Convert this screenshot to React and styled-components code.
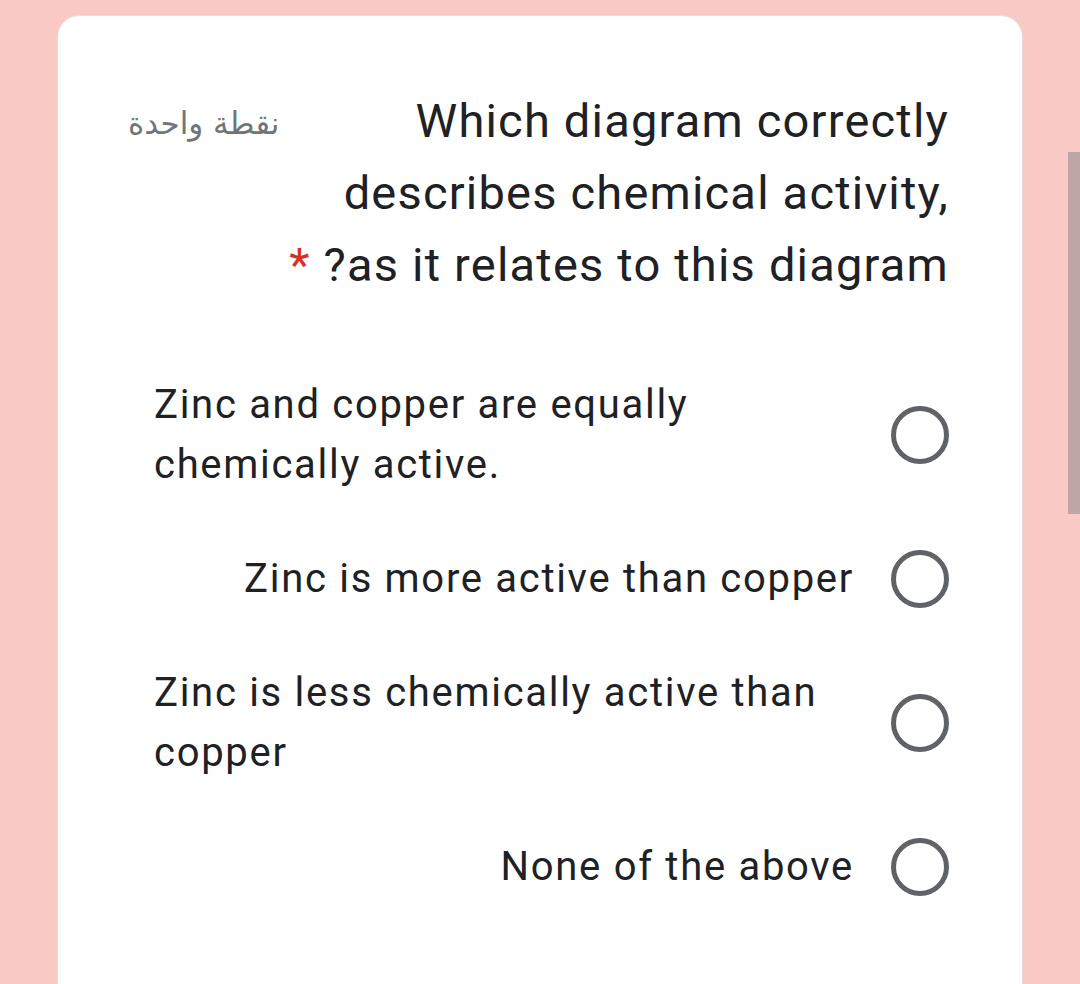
import React from 'react';
import styled, { createGlobalStyle } from 'styled-components';

const GlobalStyle = createGlobalStyle`
html, body {
    margin: 0;
    padding: 0;
    overflow: hidden;
    background: #f9c9c6;
}
body {
    font-family: Roboto, "Noto Sans", sans-serif;
    color: #202124;
}
`

const Page = styled.div`
padding: 15px 57px 0;
height: 984px;
box-sizing: border-box;
`

const Card = styled.div`
background: #fff;
border: 1px solid #e6dcdc;
border-bottom: none;
border-radius: 22px 22px 0 0;
min-height: 1000px;
box-sizing: border-box;
padding: 69px 73px 0 70px;
`

const Header = styled.div`
display: flex;
justify-content: space-between;
align-items: flex-start;
`

const Points = styled.div`
font-family: "DejaVu Sans", sans-serif;
font-size: 31px;
line-height: 76px;
color: #70757a;
direction: rtl;
`

const Title = styled.div`
font-size: 47px;
letter-spacing: 1.2px;
line-height: 72px;
text-align: right;
direction: rtl;
color: #202124;
`

const Required = styled.span`
color: #d93025;
`

const Options = styled.div`
margin-top: 62px;
padding-left: 26px;
`

const OptionRow = styled.label`
display: flex;
justify-content: flex-end;
align-items: center;
min-height: 144px;
gap: 37px;
`

const OptionText = styled.span`
flex: 0 1 auto;
max-width: 700px;
font-size: 40px;
letter-spacing: 1.7px;
line-height: 60px;
text-align: left;
color: #202124;
`

const Radio = styled.span`
flex: none;
width: 58px;
height: 58px;
box-sizing: border-box;
border: 5px solid #5f6368;
border-radius: 50%;
`

const Scrollbar = styled.div`
position: fixed;
right: 0;
top: 152px;
width: 12px;
height: 362px;
background: #bfa6a6;
`

const options = [
    'Zinc and copper are equally chemically active.',
    'Zinc is more active than copper',
    'Zinc is less chemically active than copper',
    'None of the above',
];

const App = () => {
    return <>
        <GlobalStyle />
        <Page>
            <Card>
                <Header>
                    <Points>نقطة واحدة</Points>
                    <Title>
                        Which diagram correctly<br />
                        {'describes chemical activity,\u200E'}<br />
                        as it relates to this diagram? <Required>*</Required>
                    </Title>
                </Header>
                <Options>
                    {options.map(text => (
                        <OptionRow key={text}>
                            <OptionText>{text}</OptionText>
                            <Radio />
                        </OptionRow>
                    ))}
                </Options>
            </Card>
        </Page>
        <Scrollbar />
    </>;
};

export default App;
